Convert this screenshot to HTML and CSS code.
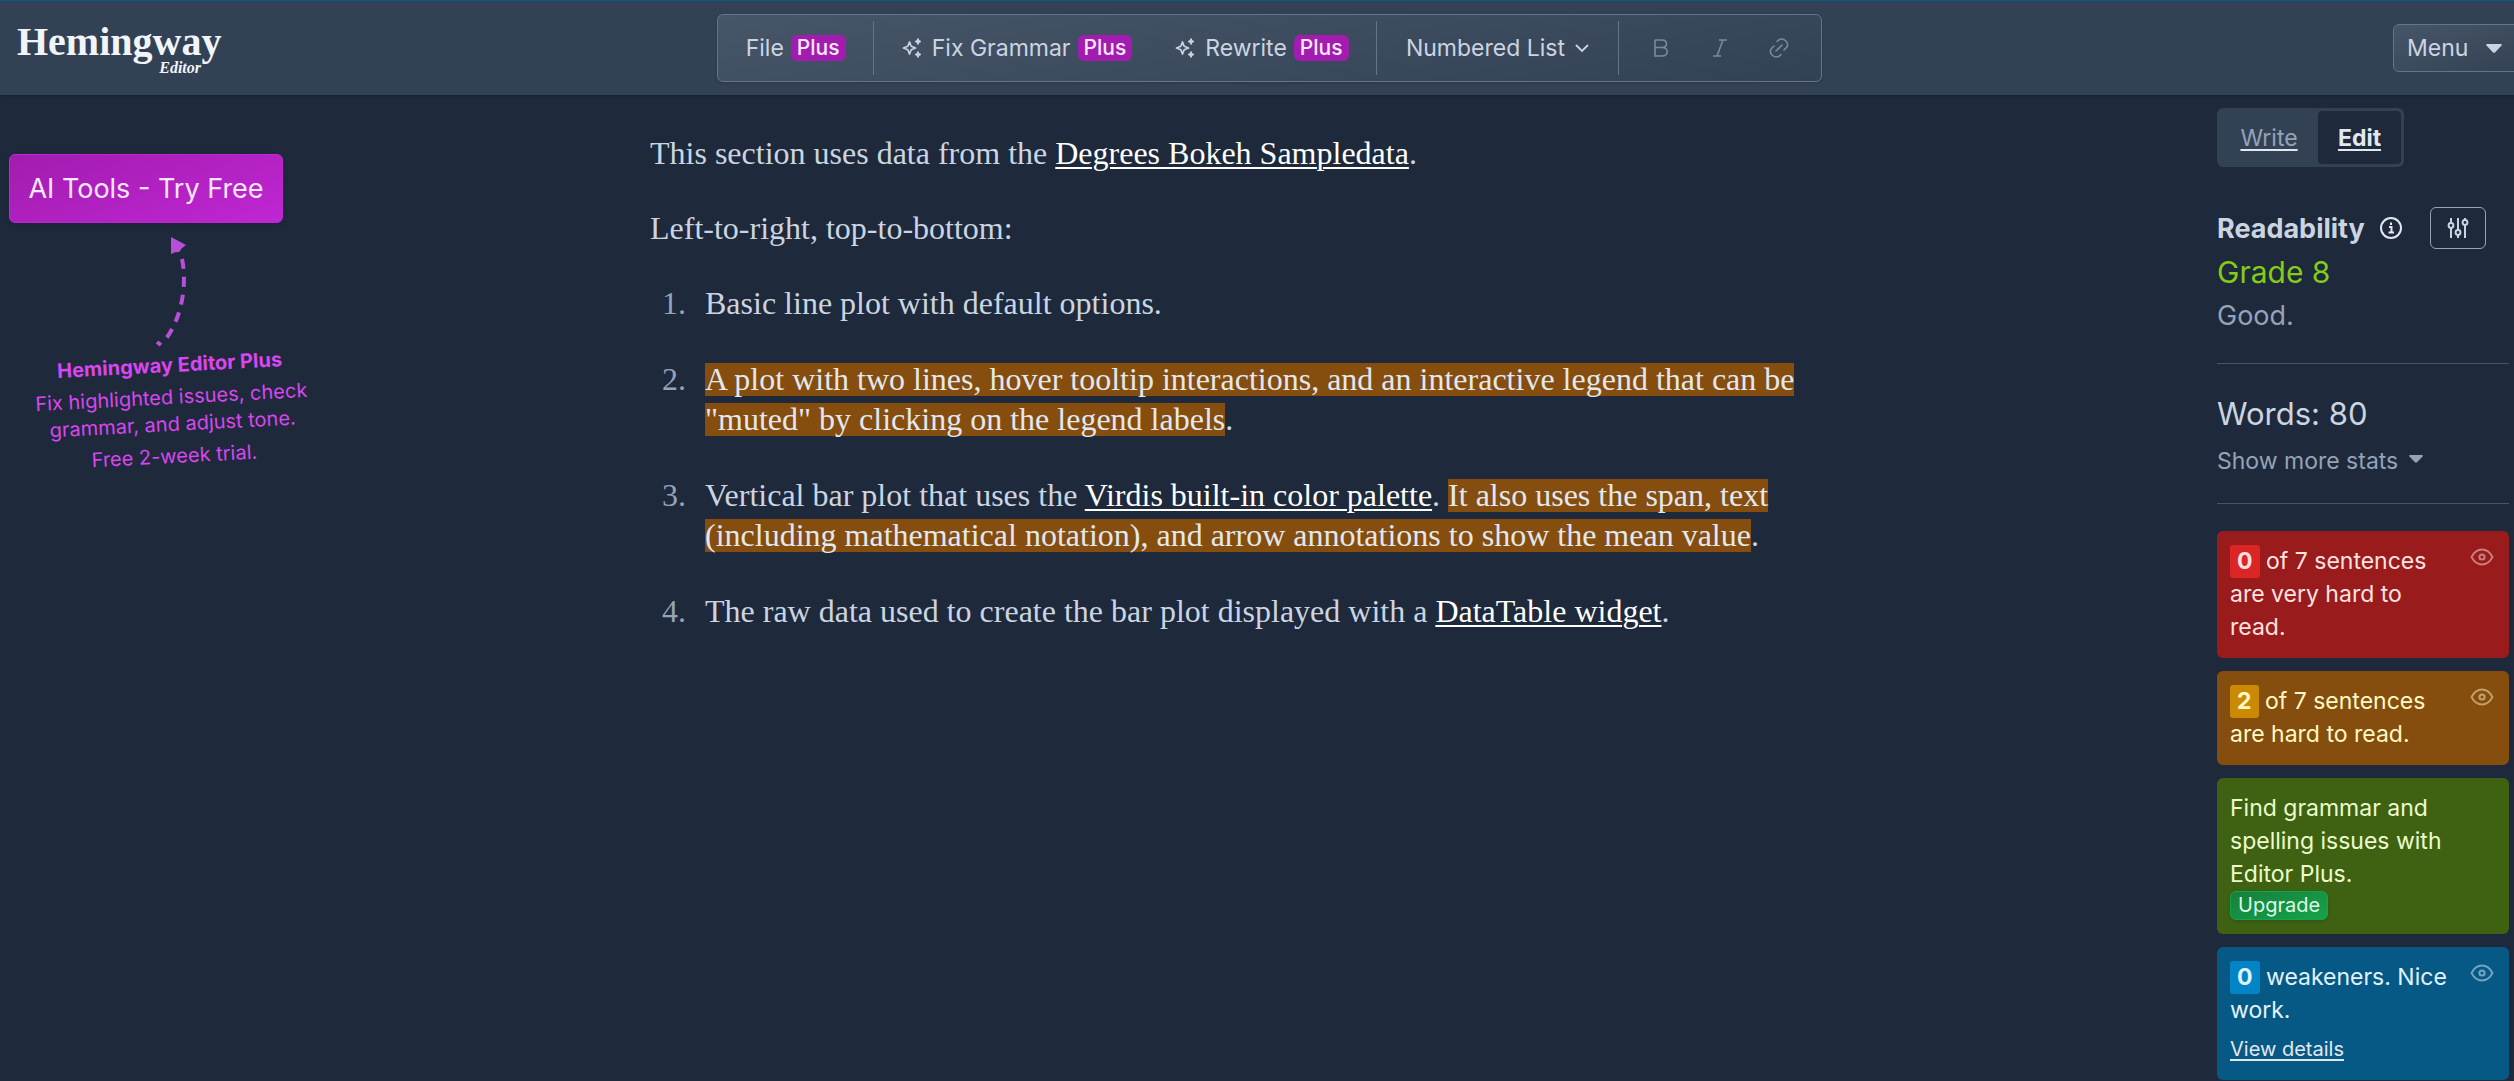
FILE: index.html
```html
<!DOCTYPE html>
<html lang="en">
<head>
<meta charset="utf-8">
<meta name="viewport" content="width=device-width, initial-scale=1">
<title>Hemingway Editor</title>
<link rel="stylesheet" href="styles.css">
</head>
<body>
<svg class="sprite" aria-hidden="true">
  <symbol id="sparkles" viewBox="0 0 20 20">
    <path d="M7 4 L8.7 8.3 L13 10 L8.7 11.700 L7 16 L5.300 11.700 L1 10 L5.300 8.300 Z" fill="none" stroke="currentColor" stroke-width="1.700" stroke-linejoin="round"/>
    <path d="M15.500 0.500 L16.400 2.600 L18.500 3.500 L16.400 4.400 L15.500 6.500 L14.600 4.400 L12.500 3.500 L14.600 2.600 Z M15.500 13.500 L16.400 15.600 L18.500 16.500 L16.400 17.400 L15.500 19.500 L14.600 17.400 L12.500 16.500 L14.600 15.600 Z" fill="currentColor" stroke="currentColor" stroke-width="1"/>
  </symbol>
  <symbol id="eye" viewBox="0 0 24 18">
    <path d="M1.500 9 C4 4.200 7.600 1.500 12 1.500 S20 4.200 22.500 9 C20 13.800 16.400 16.500 12 16.500 S4 13.800 1.500 9 Z" fill="none" stroke="currentColor" stroke-width="1.800"/>
    <circle cx="12" cy="9" r="2.600" fill="none" stroke="currentColor" stroke-width="2"/>
  </symbol>
  <symbol id="caret" viewBox="0 0 16 9">
    <path d="M1 0 H15 Q16.500 0.500 15.300 1.800 L9.200 8.200 Q8 9.200 6.800 8.200 L0.700 1.800 Q-0.500 0.500 1 0 Z" fill="currentColor"/>
  </symbol>
</svg>

<header class="topbar">
  <a class="logo" href="#"><span class="logo-name">Hemingway</span><span class="logo-sub">Editor</span></a>
  <div class="toolbar" role="toolbar" aria-label="Formatting">
    <div class="group group-file">
      <button class="tool" type="button">File <span class="plus">Plus</span></button>
    </div>
    <div class="group group-ai">
      <button class="tool" type="button"><svg class="spark"><use href="#sparkles"/></svg>Fix Grammar <span class="plus">Plus</span></button>
      <button class="tool" type="button"><svg class="spark"><use href="#sparkles"/></svg>Rewrite <span class="plus">Plus</span></button>
    </div>
    <div class="group group-list">
      <button class="tool" type="button">Numbered List <svg class="chevron" viewBox="0 0 14 9"><path d="M1.500 1.500 L7 7 L12.500 1.500" fill="none" stroke="currentColor" stroke-width="1.800" stroke-linecap="round"/></svg></button>
    </div>
    <div class="group group-format">
      <button class="tool" type="button" aria-label="Bold" disabled><svg class="format" viewBox="0 0 20 20"><path d="M4 2 H11 C17 2 17 9.500 11 9.500 H4 M11 9.500 C18 9.500 18 18 11 18 H4 V2" fill="none" stroke="currentColor" stroke-width="1.600"/></svg></button>
      <button class="tool" type="button" aria-label="Italic" disabled><svg class="format" viewBox="0 0 20 20"><path d="M9 2 H17 M3 18 H11 M13 2 L7 18" fill="none" stroke="currentColor" stroke-width="1.600"/></svg></button>
      <button class="tool" type="button" aria-label="Link" disabled><svg class="format" viewBox="0 0 20 20"><path d="M8 3.500 L9.500 2.200 C14.500 -1.500 21 5 17.500 9.500 L15 12 M12 16.500 L10.500 17.800 C5.500 21.500 -1 15 2.500 10.500 L5 8 M7 13 L13 7" fill="none" stroke="currentColor" stroke-width="1.600" stroke-linecap="round"/></svg></button>
    </div>
  </div>
  <button class="menu" type="button">Menu <svg class="caret"><use href="#caret"/></svg></button>
</header>

<div class="layout">
  <aside class="promo">
    <button class="try" type="button">AI Tools - Try Free</button>
    <svg class="arrow" viewBox="0 0 40 120">
      <path d="M15 5 L30 13 L25 17 Q24 21 20 20 L15 22 Z" fill="currentColor"/>
      <path d="M26 27 C31 50 27 85 9 108" fill="none" stroke="currentColor" stroke-width="4" stroke-dasharray="10 8"/>
      <path d="M1 110 L5 113" fill="none" stroke="currentColor" stroke-width="4"/>
    </svg>
    <div class="pitch">
      <strong>Hemingway Editor Plus</strong>
      <p>Fix highlighted issues, check<br>grammar, and adjust tone.</p>
      <p>Free 2-week trial.</p>
    </div>
  </aside>

  <main class="document">
    <p>This section uses data from the <a href="#">Degrees Bokeh Sampledata</a>.</p>
    <p>Left-to-right, top-to-bottom:</p>
    <ol>
      <li>Basic line plot with default options.</li>
      <li><mark>A plot with two lines, hover tooltip interactions, and an interactive legend that can be "muted" by clicking on the legend labels</mark>.</li>
      <li>Vertical bar plot that uses the <a href="#">Virdis built-in color palette</a>. <mark>It also uses the span, text (including mathematical notation), and arrow annotations to show the mean value</mark>.</li>
      <li>The raw data used to create the bar plot displayed with a <a href="#">DataTable widget</a>.</li>
    </ol>
  </main>

  <aside class="stats">
    <nav class="mode"><a href="#">Write</a><a class="active" href="#">Edit</a></nav>
    <section class="readability">
      <div class="heading">
        <h2>Readability</h2>
        <svg class="info" viewBox="0 0 24 24"><circle cx="12" cy="12" r="10" fill="none" stroke="currentColor" stroke-width="2"/><path d="M12 6.500 V9 M10 11 H12.500 V16.500 M9.500 16.500 H15" fill="none" stroke="currentColor" stroke-width="2"/></svg>
        <button class="settings" type="button" aria-label="Readability settings"><svg viewBox="0 0 20 20"><g fill="none" stroke="currentColor" stroke-width="2"><path d="M3 0 V5 M3 10 V20 M10 0 V12 M10 17 V20 M17 0 V2 M17 7 V20"/><circle cx="3" cy="7.500" r="2.400"/><circle cx="10" cy="14.500" r="2.400"/><circle cx="17" cy="4.500" r="2.400"/></g></svg></button>
      </div>
      <div class="grade">Grade 8</div>
      <div class="verdict">Good.</div>
    </section>
    <section class="counts">
      <div class="words">Words: 80</div>
      <button class="more" type="button">Show more stats <svg class="caret"><use href="#caret"/></svg></button>
    </section>
    <section class="cards">
      <div class="card red"><p><b>0</b> of 7 sentences are very hard to read.</p><svg class="eye"><use href="#eye"/></svg></div>
      <div class="card amber"><p><b>2</b> of 7 sentences are hard to read.</p><svg class="eye"><use href="#eye"/></svg></div>
      <div class="card green"><div><p>Find grammar and spelling issues with Editor Plus.</p><button class="upgrade" type="button">Upgrade</button></div></div>
      <div class="card blue"><div><p><b>0</b> weakeners. Nice work.</p><a class="details" href="#">View details</a></div><svg class="eye"><use href="#eye"/></svg></div>
    </section>
  </aside>
</div>
</body>
</html>
```
FILE: styles.css
```css
* { box-sizing: border-box; }

body {
  margin: 0;
  background: #1e293b;
  color: #cbd5e1;
  font: 23px/33px Inter, sans-serif;
  overflow-x: hidden;
}

h2, p, ol { margin: 0; padding: 0; }
button { font: inherit; color: inherit; background: none; border: 0; padding: 0; }
svg { flex: none; }
.sprite { position: absolute; width: 0; height: 0; }

/* Top bar */
.topbar {
  display: grid;
  grid-template-columns: 717fr 1105fr 692fr;
  align-items: center;
  height: 95px;
  border-top: 1px solid #075985;
  background: #334155;
  box-shadow: 0 1px 3px #0f172a80;
  overflow: hidden;
}
.logo {
  display: flex;
  flex-direction: column;
  width: 208px;
  margin-left: 17px;
  padding-bottom: 4px;
  color: #f1f5f9;
  font-family: "Liberation Serif", serif;
  font-weight: 700;
  text-decoration: none;
}
.logo-name { font-size: 40px; line-height: 44px; }
.logo-sub { padding-right: 24px; font-size: 16px; line-height: 8px; font-style: italic; text-align: right; }

.toolbar {
  display: flex;
  height: 68px;
  padding: 6px 0;
  border: 1px solid #64748b;
  border-radius: 6px;
  background: linear-gradient(170deg, #475569, #334155);
  box-shadow: 0 1px 3px #0f172a40;
}
.group { display: flex; align-items: center; justify-content: center; }
.group + .group { border-left: 1px solid #64748b; }
.group-file { flex: 156; }
.group-ai { flex: 504; gap: 43px; }
.group-list { flex: 242; }
.group-format { flex: 203; gap: 39px; }
.tool { display: flex; align-items: center; gap: 7px; white-space: nowrap; }
.tool:disabled { color: #7c8a9e; }
.plus {
  padding: 0 6px;
  border-radius: 6px;
  background: #a21caf;
  color: #fae8ff;
  font-size: 21px;
  font-weight: 500;
  line-height: 26px;
}
.spark { width: 21px; height: 20px; margin-right: 2px; }
.chevron { width: 14px; height: 9px; margin-left: 3px; }
.format { width: 20px; height: 20px; }

.menu {
  display: flex;
  align-items: center;
  justify-content: space-between;
  justify-self: end;
  width: 134px;
  height: 48px;
  margin-right: -13px;
  padding: 0 24px 0 13px;
  border: 1px solid #64748b;
  border-radius: 6px;
  background: linear-gradient(160deg, #475569, #334155);
}
.caret { width: 16px; height: 9px; }

/* Page columns */
.layout { display: grid; grid-template-columns: 650px minmax(0, 1fr) 297px; }

.promo { padding: 59px 0 0 9px; }
.try {
  width: 274px;
  height: 69px;
  border: 1px solid #c026d3;
  border-radius: 6px;
  background: linear-gradient(160deg, #a21caf, #c026d3);
  box-shadow: 0 2px 4px #0f172a40;
  color: #fae8ff;
  font-size: 27px;
}
.arrow { display: block; width: 40px; height: 120px; margin: 9px 0 0 147px; color: #b84fd8; }
.pitch {
  width: 300px;
  margin-left: 13px;
  color: #d946ef;
  font-size: 20px;
  line-height: 27px;
  text-align: center;
  transform: rotate(-3deg);
}
.pitch p { margin-top: 5px; }

.document {
  max-width: 1214px;
  padding-top: 38px;
  font: 32px/40px "Liberation Serif", serif;
}
.document p { margin-bottom: 35px; }
.document li { margin-bottom: 36px; }
.document a { color: #fff; text-decoration-thickness: 2px; text-underline-offset: 3px; }
.document ol { list-style: none; counter-reset: item; }
.document li { display: block; padding-left: 55px; counter-increment: item; }
.document li::before {
  content: counter(item) ".";
  float: left;
  width: 36px;
  margin-left: -55px;
  color: #94a3b8;
  text-align: right;
}
mark {
  background: linear-gradient(#854d0e, #854d0e) 0 50% / 100% 33px no-repeat;
  box-decoration-break: clone;
  -webkit-box-decoration-break: clone;
  color: #e2e8f0;
}

/* Statistics column */
.stats { padding: 13px 5px 3px 0; }
.mode {
  display: flex;
  width: 187px;
  height: 59px;
  padding: 3px;
  border-radius: 6px;
  background: #334155;
}
.mode a { flex: 98; color: #94a3b8; line-height: 55px; text-align: center; text-decoration: underline #e2e8f0 2px; text-underline-offset: 3px; }
.mode .active { flex: 83; border-radius: 4px; background: #1e293b; color: #e2e8f0; font-weight: 700; }

.readability { padding: 40px 0 28px; border-bottom: 1px solid #475569; }
.heading { display: flex; align-items: center; }
.heading h2 { font-size: 27px; font-weight: 700; }
.info { width: 24px; height: 24px; margin-left: 14px; color: #e2e8f0; }
.settings { display: grid; place-items: center; width: 56px; height: 42px; margin-left: 27px; border: 1px solid #94a3b8; border-radius: 6px; }
.settings svg { width: 20px; height: 20px; overflow: visible; }
.grade { color: #84cc16; font-size: 30px; line-height: 46px; }
.verdict { padding-top: 2px; color: #94a3b8; font-size: 27px; line-height: 38px; }

.counts { padding: 29px 0 20px; border-bottom: 1px solid #475569; }
.words { font-size: 31px; line-height: 42px; }
.more { display: flex; align-items: center; gap: 11px; margin-top: 4px; color: #94a3b8; line-height: 44px; }
.more .caret { width: 14px; height: 8px; margin-bottom: 4px; }

.cards { display: flex; flex-direction: column; gap: 13px; padding-top: 27px; }
.card { display: flex; justify-content: space-between; padding: 14px 15px 14px 13px; border-radius: 6px; }
.card > p, .card > div { width: 220px; }
.card b { display: inline-block; padding: 0 7px; border-radius: 3px; }
.eye { width: 24px; height: 18px; margin-top: 3px; opacity: 0.5; }
.red { background: #991b1b; color: #fee2e2; }
.red b { background: #dc2626; }
.amber { background: #854d0e; color: #fef9c3; }
.amber b { background: #ca8a04; }
.green { background: #3f6212; color: #ecfccb; }
.blue { background: #075985; color: #e0f2fe; }
.blue b { background: #0284c7; }
.upgrade {
  display: block;
  padding: 0 7px;
  border: 1px solid #16a34a;
  border-radius: 6px;
  background: linear-gradient(160deg, #15803d, #16a34a);
  box-shadow: 0 1px 3px #0f172a40;
  color: #dcfce7;
  font-size: 20px;
  line-height: 27px;
}
.details { display: block; margin-top: 6px; color: #e2e8f0; font-size: 20px; text-underline-offset: 3px; }
```
